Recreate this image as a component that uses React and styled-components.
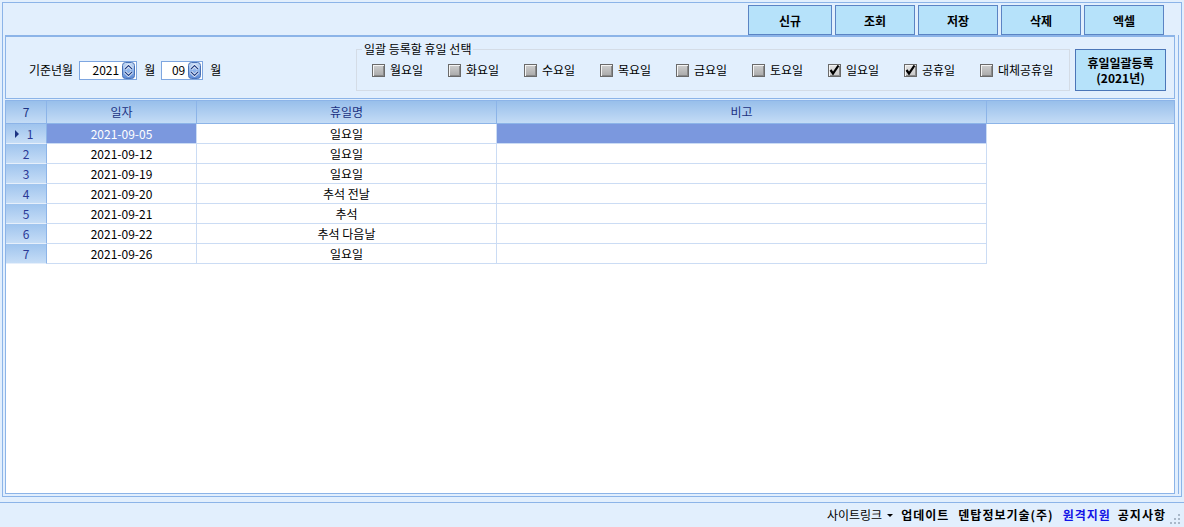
import React from 'react';
import styled, { createGlobalStyle } from 'styled-components';

const GlobalStyle = createGlobalStyle`
  html, body { margin: 0; padding: 0; }
  body {
    font-family: "Noto Sans CJK KR", "Noto Sans", sans-serif;
    font-size: 12px;
    color: #000;
    background: #e2effd;
  }
  * { box-sizing: border-box; }
`;

const Screen = styled.div`
  width: 1184px;
  height: 527px;
  background: #e2effd;
  display: flex;
  flex-direction: column;
  overflow: hidden;
`;

const Frame = styled.div`
  margin: 2px 2px 0 2px;
  height: 495px;
  border: 1px solid #8cb4e8;
  display: flex;
  flex-direction: column;
  padding: 0 2px 2px 2px;
`;

const Toolbar = styled.div`
  height: 32px;
  display: flex;
  justify-content: flex-end;
  align-items: flex-start;
  gap: 3px;
  padding: 2px 15px 0 0;
`;

const ToolButton = styled.button`
  width: ${p => (p.$wide ? 84 : 80)}px;
  height: 30px;
  background: #b6e2fa;
  border: 1px solid #5b84c4;
  font-family: inherit;
  font-size: 12px;
  font-weight: bold;
  color: #000;
  padding: 0;
  cursor: pointer;
`;

const Content = styled.div`
  flex: 1;
  display: flex;
  flex-direction: column;
  border-right: 1px solid #8cb4e8;
  padding-right: 3px;
`;

const Panel = styled.div`
  height: 64px;
  border: 1px solid #8cb4e8;
  border-top-width: 2px;
  display: flex;
  align-items: center;
  padding: 5px 8px 0 23px;
`;

const DateBlock = styled.div`
  flex: 1;
  display: flex;
  align-items: center;
`;

const Label = styled.span`
  line-height: 14px;
  margin-right: ${p => p.$mr || 0}px;
`;

const SpinBox = styled.div`
  width: ${p => p.$w}px;
  height: 19px;
  background: #fff;
  border: 1px solid #7ea6e0;
  display: flex;
  align-items: center;
  justify-content: flex-end;
  padding-right: 1px;
  margin-right: ${p => p.$mr || 0}px;
`;

const SpinValue = styled.span`
  font-size: 12px;
  line-height: 14px;
  margin-right: 3px;
`;

const GroupBox = styled.div`
  position: relative;
  width: 714px;
  height: 42px;
  border: 1px solid #d4dce6;
  display: flex;
  align-items: center;
  padding-left: 15px;
`;

const Legend = styled.span`
  position: absolute;
  left: 5px;
  top: -8px;
  padding: 0 2px;
  line-height: 14px;
  background: #e2effd;
`;

const CheckItem = styled.label`
  width: 76px;
  display: flex;
  align-items: center;
  gap: 5px;
  line-height: 14px;
  white-space: nowrap;
`;

const Box = styled.span`
  width: 13px;
  height: 13px;
  border: 1px solid #6a6a6a;
  background: ${p => (p.$checked ? 'linear-gradient(#e4e4e4, #c8c8c8)' : 'linear-gradient(#cfcfcf, #a9a9a9)')};
  box-shadow: inset 1px 1px 0 #f4f4f4, inset -1px -1px 0 #8a8a8a;
  display: flex;
  align-items: center;
  justify-content: center;
`;

const BulkButton = styled.button`
  width: 91px;
  height: 42px;
  margin-left: 5px;
  background: #b6e2fa;
  border: 1px solid #4b76b8;
  font-family: inherit;
  font-size: 12px;
  font-weight: bold;
  color: #000;
  padding: 0;
  display: flex;
  flex-direction: column;
  align-items: center;
  justify-content: center;
`;

const BulkLine = styled.span`
  line-height: 15px;
`;

const Grid = styled.div`
  flex: 1;
  margin-top: 1px;
  border: 1px solid #8cb4e8;
  background: #fff;
  display: grid;
  grid-template-columns: 41px 150px 300px 490px 1fr;
  grid-auto-rows: 20px;
  grid-template-rows: 23px;
  align-content: start;
`;

const HeadCell = styled.div`
  height: 23px;
  background: linear-gradient(#98bfeb, #c4dcf6);
  border-bottom: 1px solid #8cb4e8;
  border-right: ${p => (p.$last ? 'none' : '1px solid #8cb4e8')};
  color: #1b3282;
  display: flex;
  align-items: center;
  justify-content: center;
  line-height: 14px;
`;

const RowHead = styled.div`
  background: linear-gradient(#9fc4ee, #c6ddf6);
  border-bottom: 1px solid #e6effb;
  border-right: 1px solid #8cb4e8;
  color: #2a3896;
  display: flex;
  align-items: center;
  justify-content: center;
  position: relative;
  line-height: 14px;
`;

const RowNum = styled.span`
  margin-left: ${p => (p.$current ? 8 : 0)}px;
`;

const Pointer = styled.span`
  position: absolute;
  left: 9px;
  top: 6px;
  width: 0;
  height: 0;
  border-top: 4px solid transparent;
  border-bottom: 4px solid transparent;
  border-left: 4px solid #1b3282;
`;

const Cell = styled.div`
  background: ${p => (p.$sel ? '#7b98de' : '#fff')};
  color: ${p => (p.$sel ? '#fff' : '#000')};
  border-bottom: 1px solid #cbdcf4;
  border-right: 1px solid #cbdcf4;
  display: flex;
  align-items: center;
  justify-content: center;
  line-height: 14px;
  white-space: pre;
`;

const Blank = styled.div``;

const StatusBar = styled.div`
  margin-top: 5px;
  height: 25px;
  border-top: 1px solid #8cb4e8;
  display: flex;
  align-items: center;
  justify-content: flex-end;
  padding-right: 3px;
`;

const StatusItem = styled.span`
  font-weight: ${p => (p.$bold ? 'bold' : 'normal')};
  letter-spacing: ${p => (p.$bold ? 1 : 0)}px;
  color: ${p => p.$color || '#000'};
  margin-left: ${p => p.$ml ?? 9}px;
  line-height: 14px;
  white-space: nowrap;
`;

const Caret = styled.span`
  margin-left: 5px;
  width: 0;
  height: 0;
  border-left: 3px solid transparent;
  border-right: 3px solid transparent;
  border-top: 3px solid #000;
`;

const Grip = styled.svg`
  align-self: flex-end;
  margin: 0 0 2px 3px;
`;

const rows = [
  ['2021-09-05', '일요일'],
  ['2021-09-12', '일요일'],
  ['2021-09-19', '일요일'],
  ['2021-09-20', '추석 전날'],
  ['2021-09-21', '추석'],
  ['2021-09-22', '추석 다음날'],
  ['2021-09-26', '일요일'],
];

const days = [
  ['월요일', false],
  ['화요일', false],
  ['수요일', false],
  ['목요일', false],
  ['금요일', false],
  ['토요일', false],
  ['일요일', true],
  ['공휴일', true],
  ['대체공휴일', false],
];

const Spinner = () => (
  <svg width="13" height="17" viewBox="0 0 13 17">
    <defs>
      <linearGradient id="spg" x1="0" y1="0" x2="0" y2="1">
        <stop offset="0" stopColor="#c9ddf6" />
        <stop offset="0.5" stopColor="#8fb4ea" />
        <stop offset="1" stopColor="#5b88d4" />
      </linearGradient>
    </defs>
    <rect x="0.5" y="0.5" width="12" height="16" rx="3" fill="url(#spg)" stroke="#4a72b6" />
    <path d="M3 7 L6.5 3.5 L10 7" fill="none" stroke="#fff" strokeWidth="2.6" strokeLinejoin="round" />
    <path d="M3 7 L6.5 3.5 L10 7" fill="none" stroke="#1d3c84" strokeWidth="1.2" />
    <path d="M3 10 L6.5 13.5 L10 10" fill="none" stroke="#fff" strokeWidth="2.6" strokeLinejoin="round" />
    <path d="M3 10 L6.5 13.5 L10 10" fill="none" stroke="#1d3c84" strokeWidth="1.2" />
  </svg>
);

const CheckMark = () => (
  <svg width="11" height="11" viewBox="0 0 11 11">
    <path d="M1.5 5 L4 8.5 L9.5 0.5" fill="none" stroke="#000" strokeWidth="2.2" />
  </svg>
);

const App = () => {
  return (
    <Screen>
      <GlobalStyle />
      <Frame>
        <Toolbar>
          <ToolButton $wide>신규</ToolButton>
          <ToolButton>조회</ToolButton>
          <ToolButton>저장</ToolButton>
          <ToolButton>삭제</ToolButton>
          <ToolButton>엑셀</ToolButton>
        </Toolbar>
        <Content>
          <Panel>
            <DateBlock>
              <Label $mr={6}>기준년월</Label>
              <SpinBox $w={58} $mr={7}>
                <SpinValue>2021</SpinValue>
                <Spinner />
              </SpinBox>
              <Label $mr={6}>월</Label>
              <SpinBox $w={42} $mr={7}>
                <SpinValue>09</SpinValue>
                <Spinner />
              </SpinBox>
              <Label>월</Label>
            </DateBlock>
            <GroupBox>
              <Legend>일괄 등록할 휴일 선택</Legend>
              {days.map(([name, checked]) => (
                <CheckItem key={name}>
                  <Box $checked={checked}>{checked && <CheckMark />}</Box>
                  {name}
                </CheckItem>
              ))}
            </GroupBox>
            <BulkButton>
              <BulkLine>휴일일괄등록</BulkLine>
              <BulkLine>(2021년)</BulkLine>
            </BulkButton>
          </Panel>
          <Grid>
            <HeadCell>7</HeadCell>
            <HeadCell>일자</HeadCell>
            <HeadCell>휴일명</HeadCell>
            <HeadCell>비고</HeadCell>
            <HeadCell $last />
            {rows.map(([date, name], i) => (
              <React.Fragment key={date}>
                <RowHead>
                  {i === 0 && <Pointer />}
                  <RowNum $current={i === 0}>{i + 1}</RowNum>
                </RowHead>
                <Cell $sel={i === 0}>{date}</Cell>
                <Cell>{name}</Cell>
                <Cell $sel={i === 0} />
                <Blank />
              </React.Fragment>
            ))}
          </Grid>
        </Content>
      </Frame>
      <StatusBar>
        <StatusItem $ml={0}>사이트링크</StatusItem>
        <Caret />
        <StatusItem $bold $ml={8}>업데이트</StatusItem>
        <StatusItem $bold>덴탑정보기술(주)</StatusItem>
        <StatusItem $bold $color="#1414e6">원격지원</StatusItem>
        <StatusItem $bold $ml={7}>공지사항</StatusItem>
        <Grip width="12" height="12" viewBox="0 0 12 12">
          {[[9, 1], [9, 5], [5, 5], [9, 9], [5, 9], [1, 9]].map(([x, y]) => (
            <rect key={`${x}-${y}`} x={x} y={y} width="2" height="2" fill="#a9b8c9" />
          ))}
        </Grip>
      </StatusBar>
    </Screen>
  );
};

export default App;
